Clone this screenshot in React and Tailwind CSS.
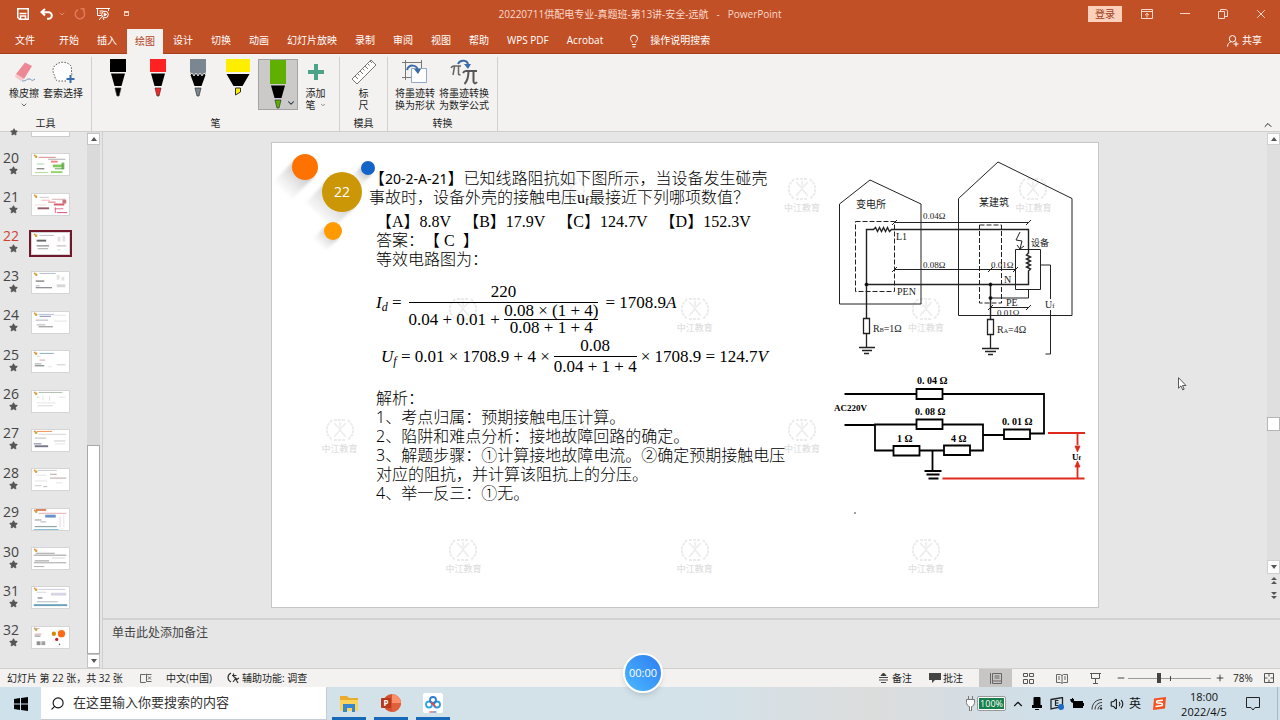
import { useState } from 'react';
import { Search, ChevronDown, ChevronUp, Star, Lightbulb, Volume2, Minus, Plus, X } from 'lucide-react';

const TABS = ['开始', '插入', '绘图', '设计', '切换', '动画', '幻灯片放映', '录制', '审阅', '视图', '帮助', 'WPS PDF', 'Acrobat'];

// marks: [x, y, width, height, color] inside a 37 x 22 thumbnail
const SLIDES = [
    { no: 20, marks: [[6, 3, 18, 1, '#c66'], [16, 5, 18, 1, '#999'], [19, 7, 7, 2, '#e66'], [4, 10, 8, 1, '#9c9'], [21, 11, 11, 3, '#6b3'], [30, 9, 3, 7, '#5aa845'], [23, 15, 9, 1, '#393'], [19, 18, 12, 2, '#7c4'], [4, 15, 8, 1, '#333'], [2, 19, 14, 1, '#9c7']] },
    { no: 21, marks: [[7, 3, 10, 1, '#bbb'], [9, 6, 9, 1, '#e9a'], [16, 8, 8, 1, '#c44'], [20, 5, 14, 1, '#c99'], [31, 6, 4, 4, '#b55'], [22, 10, 11, 2, '#c34'], [2, 11, 12, 1, '#ecc'], [5, 14, 12, 2, '#734'], [23, 14, 1, 6, '#d46'], [23, 15, 9, 1, '#d46'], [25, 19, 11, 1, '#c25']] },
    { no: 22, marks: [[7, 2, 15, 1, '#aab'], [4, 7, 10, 2, '#444'], [4, 13, 13, 1, '#444'], [5, 16, 11, 1, '#888'], [26, 4, 3, 5, '#ddd'], [31, 3, 3, 6, '#ddd'], [25, 13, 10, 1, '#a99'], [26, 17, 3, 1, '#ccc']] },
    { no: 23, marks: [[7, 1, 17, 1, '#9ac'], [3, 9, 9, 1, '#222'], [3, 14, 4, 1, '#99c'], [3, 16, 17, 1, '#444'], [25, 3, 3, 5, '#ddd'], [30, 5, 3, 4, '#ddd'], [25, 13, 9, 3, '#ccc']] },
    { no: 24, marks: [[6, 2, 16, 1, '#9ac'], [7, 4, 12, 1, '#669'], [3, 8, 13, 1, '#99a'], [22, 3, 12, 1, '#ddd'], [22, 9, 14, 1, '#ddd'], [4, 13, 9, 1, '#99a'], [6, 15, 15, 1, '#666']] },
    { no: 25, marks: [[7, 2, 15, 1, '#69a'], [4, 5, 4, 1, '#ccc'], [7, 9, 6, 1, '#c88'], [2, 13, 7, 1, '#888'], [2, 15, 10, 1, '#444'], [25, 14, 9, 1, '#bbb'], [16, 16, 4, 1, '#ddd']] },
    { no: 26, marks: [[6, 1, 25, 1, '#9a9'], [4, 6, 3, 1, '#ccc'], [10, 5, 1, 5, '#ddd'], [17, 5, 1, 5, '#ddd'], [27, 6, 7, 1, '#ddd'], [4, 12, 20, 1, '#ddd'], [5, 15, 16, 1, '#ccc']] },
    { no: 27, marks: [[4, 1, 16, 1, '#e73'], [6, 4, 29, 1, '#ccc'], [2, 8, 12, 1, '#aaa'], [1, 14, 8, 1, '#558'], [2, 16, 14, 2, '#556'], [22, 11, 12, 1, '#bbb'], [23, 14, 11, 1, '#ddd']] },
    { no: 28, marks: [[5, 1, 20, 1, '#bbb'], [3, 6, 11, 1, '#ddd'], [18, 5, 7, 1, '#a88'], [18, 9, 17, 1, '#a88'], [2, 12, 13, 1, '#ddd'], [24, 14, 7, 1, '#ddd'], [2, 17, 7, 1, '#bbb'], [11, 18, 4, 1, '#a9a']] },
    { no: 29, marks: [[3, 0, 11, 2, '#c63'], [6, 4, 29, 1, '#d99'], [13, 6, 11, 3, '#47b'], [2, 11, 7, 1, '#777'], [8, 13, 6, 1, '#99a'], [2, 18, 23, 1, '#577'], [28, 8, 1, 11, '#dcc'], [32, 6, 1, 13, '#dde'], [1, 21, 26, 1, '#6ac']] },
    { no: 30, marks: [[3, 5, 20, 1, '#888'], [1, 7, 34, 1, '#777'], [2, 13, 15, 1, '#777'], [20, 10, 14, 1, '#ccc'], [1, 15, 34, 1, '#888'], [1, 19, 11, 1, '#999']] },
    { no: 31, marks: [[6, 2, 28, 1, '#bbd'], [4, 5, 10, 1, '#ccd'], [19, 6, 16, 3, '#ccd'], [5, 11, 5, 1, '#334'], [4, 15, 22, 1, '#9aa'], [1, 18, 35, 2, '#48a']] },
    { no: 32, marks: [[1, 1, 6, 1, '#aaa'], [2, 7, 7, 1, '#c88'], [2, 9, 6, 1, '#555'], [4, 15, 4, 4, '#777'], [9, 15, 4, 4, '#888']] },
];

const WATERMARKS = [
    { place: 'left-[34%] top-[7%]' },
    { place: 'left-[62%] top-[7%]', label: true },
    { place: 'left-[90%] top-[7%]', label: true },
    { place: 'left-[21%] top-[33%]' },
    { place: 'left-[49%] top-[33%]', label: true },
    { place: 'left-[77%] top-[33%]', label: true },
    { place: 'left-[6%] top-[59%]', label: true },
    { place: 'left-[34%] top-[59%]' },
    { place: 'left-[62%] top-[59%]', label: true },
    { place: 'left-[21%] top-[85%]', label: true },
    { place: 'left-[49%] top-[85%]', label: true },
    { place: 'left-[77%] top-[85%]', label: true },
];

function TitleBar() {
    return (
        <header className="flex h-[27px] items-center">
            <div className="flex flex-1 items-center">
                <button aria-label="保存" className="ml-4 flex h-6 w-[14px] items-center justify-center">
                    <svg width="12" height="12" viewBox="0 0 12 12" fill="none" stroke="currentColor">
                        <path d="M.75.75h10.5v10.5H2.5L.75 9.5z" strokeWidth="1.5" />
                        <path d="M2.5 5.5h7M3.5 11V8h5v3" strokeWidth="1.5" />
                    </svg>
                </button>
                <button aria-label="撤消" className="ml-[10px] flex h-6 w-[14px] items-center justify-center">
                    <svg width="14" height="12" viewBox="0 0 14 12" fill="none" stroke="currentColor" strokeWidth="2">
                        <path d="M5 1 1.5 4 5 7.5M2 4.2h6.5a3.3 3.3 0 0 1 0 6.6H7" />
                    </svg>
                </button>
                <ChevronDown className="ml-1 h-2 w-2 text-[#f0a890]" />
                <button aria-label="恢复" className="ml-[7px] flex h-6 w-[14px] items-center justify-center text-[#e0795a]">
                    <svg width="12" height="12" viewBox="0 0 12 12" fill="none" stroke="currentColor" strokeWidth="1.5">
                        <path d="M4 1.8A4.7 4.7 0 1 0 9 2.5M6.5.8H10v3.7" />
                    </svg>
                </button>
                <button aria-label="从头开始" className="ml-[9px] flex h-6 w-[14px] items-center justify-center">
                    <svg width="14" height="14" viewBox="0 0 14 14" fill="none" stroke="currentColor">
                        <path d="M0 1.5h14M1.5 1.5v7h4M12.5 1.5V4M3.5 4h4M3.5 6h2M3 13l3-3.5M8 13l-1-2" />
                        <circle cx="9" cy="7.5" r="3.3" />
                        <path d="m8.2 6 2.3 1.5L8.2 9z" fill="currentColor" />
                    </svg>
                </button>
                <span className="ml-[14px] h-[5px] w-[5px] border border-t-2 border-[#f6cdbd]" />
            </div>
            <h1 className="flex gap-2 whitespace-nowrap text-[10px] leading-4 text-[#fbd9cc]">
                <span>20220711供配电专业-真题班-第13讲-安全-远航</span>
                <span>-</span>
                <span>PowerPoint</span>
            </h1>
            <div className="flex flex-1 items-center justify-end text-[#fbd9cc]">
                <button className="h-4 w-[34px] bg-[#fdd0bb] text-[10px] leading-4 text-[#9c3f20]">登录</button>
                <button aria-label="功能区显示选项" className="ml-[6px] flex h-6 w-[38px] items-center justify-center">
                    <svg width="12" height="10" viewBox="0 0 12 10" fill="none" stroke="currentColor">
                        <path d="M.5.5h11v9H.5zM.5 2.5h11M6 8.5v-4M4 6.2l2-1.9 2 1.9" />
                    </svg>
                </button>
                <button aria-label="最小化" className="flex h-6 w-[38px] items-center justify-center">
                    <svg width="10" height="2" viewBox="0 0 10 2"><path d="M0 .5h10" stroke="currentColor" /></svg>
                </button>
                <button aria-label="还原" className="flex h-6 w-[38px] items-center justify-center">
                    <svg width="10" height="10" viewBox="0 0 10 10" fill="none" stroke="currentColor">
                        <path d="M.5 2.5h6v7h-6zM2.5 2.3V.5h5.2c1 0 1.8.8 1.8 1.8v5.2H7" />
                    </svg>
                </button>
                <button aria-label="关闭" className="flex h-6 w-[38px] items-center justify-center">
                    <X className="h-[14px] w-[14px]" strokeWidth={1.7} />
                </button>
            </div>
        </header>
    );
}

function TabBar({ active, onSelect }) {
    return (
        <nav className="flex h-[27px] items-end border-b border-[#a63f1b] text-[10px]">
            <button className="ml-[15px] mr-[15px] h-[25px] leading-[25px]">文件</button>
            {TABS.map((tab) => (
                <button
                    key={tab}
                    onClick={() => onSelect(tab)}
                    className={`h-[25px] whitespace-nowrap leading-[25px] ${active === tab ? '-mb-px px-2 mx-px bg-[#f3f2f1] text-[#b5431c]' : 'px-[9px]'}`}
                >
                    {tab}
                </button>
            ))}
            <button className="ml-[15px] flex h-[25px] items-center gap-[9px] leading-[25px]">
                <Lightbulb className="h-[14px] w-[14px]" strokeWidth={1.7} />
                <span>操作说明搜索</span>
            </button>
            <button className="ml-auto mr-[18px] flex h-[25px] items-center gap-[3px] leading-[25px]">
                <svg width="12" height="12" viewBox="0 0 12 12" fill="none" stroke="currentColor">
                    <circle cx="5.5" cy="3.8" r="3.2" />
                    <path d="M.5 11.5c0-2.5 1.5-4 3.5-4.7M9 6.5v5M6.5 9h5" />
                </svg>
                <span>共享</span>
            </button>
        </nav>
    );
}

function Group({ label, className = '', children }) {
    return (
        <section className="flex h-[74px] flex-col border-r border-[#d2d0ce]">
            <div className={`flex flex-1 items-start ${className}`}>{children}</div>
            <div className="text-center leading-4">{label}</div>
        </section>
    );
}

function Tool({ icon, lines, className = '' }) {
    return (
        <button className={`flex flex-col items-center whitespace-nowrap leading-3 ${className}`}>
            <span className="flex h-[30px] items-center">{icon}</span>
            {lines.map((line, idx) => (
                <span key={idx} className="flex h-3 items-center justify-center">{line}</span>
            ))}
        </button>
    );
}

function Pen({ name, color, type = 'pen', selected }) {
    const wide = type === 'marker';
    return (
        <button aria-label={name} className={`relative flex h-[51px] w-10 justify-center ${selected ? 'border border-[#a3a3a3] bg-[#cbcac8]' : ''}`}>
            <svg width="24" height="49" viewBox="0 0 24 49">
                <rect x={wide ? 0 : 4} y="0" width={wide ? 24 : 16} height={selected ? 24 : 13} fill={color} />
                <g transform={selected ? 'translate(0 11)' : undefined}>
                    {wide && <path d="M.5 15h23l-7 12h-9z" />}
                    {wide && <path d="M9.5 29h5v4l-5 3z" fill={color} stroke="#333" />}
                    {type === 'pencil' && <path d="M4.5 16 8.5 27h7l4-11-1.5-2h-12z" />}
                    {type === 'pencil' && <path d="M4 11v5l2-2 2 3 2-3 2 3 2-3 2 3 2-3 2 2v-5z" fill={color} stroke="#f3f2f1" strokeWidth=".8" />}
                    {type === 'pencil' && <rect x="4" width="16" height="13" fill={color} />}
                    {type === 'pen' && <path d="M5 14.5h14L15.5 27h-7z" />}
                    {!wide && <path d="M9 29h6l-2 8h-2z" fill={color} stroke="#333" strokeWidth=".7" />}
                </g>
            </svg>
            {selected && <ChevronDown className="absolute bottom-px right-px h-[10px] w-[10px] text-gray-800" strokeWidth={2.5} />}
        </button>
    );
}

function Ribbon() {
    return (
        <div className="flex h-[78px] border-b border-[#d0cfce] bg-[#f3f2f1] pt-[3px] text-[10px] text-[#222]">
            <Group label="工具" className="pl-2 pr-[7px]">
                <Tool
                    className="w-8"
                    lines={['橡皮擦', <ChevronDown key="more" className="h-2 w-2" />]}
                    icon={
                        <svg width="24" height="24" viewBox="0 0 24 24">
                            <path d="M13 2.5 20 6l-8 13-8-5z" fill="#ee8795" />
                            <path d="m4 14 8 5-3 2-6-4z" fill="#f8c7cc" />
                            <path d="M10 21c5 0 4-2 7-2s2 3 6 0" fill="none" stroke="#6d92bd" />
                        </svg>
                    }
                />
                <Tool
                    className="ml-[2px] w-[42px]"
                    lines={['套索选择']}
                    icon={
                        <svg width="24" height="24" viewBox="0 0 24 24" fill="none">
                            <path d="M15 21H7c-3-1-3-3-3-5-3-4-3-9 2-12 4-3 11-2 14 2 1 3 0 6 1 9" fill="#fff" stroke="#555" strokeDasharray="1.5 1.5" />
                            <path d="M19.5 15v8M15.5 19h8" stroke="#3b6caa" strokeWidth="2" />
                        </svg>
                    }
                />
            </Group>
            <Group label="笔" className="pl-[6px] pr-[6px] pt-[2px]">
                <Pen name="黑色笔" color="#000" />
                <Pen name="红色笔" color="#ff2222" />
                <Pen name="铅笔" color="#7a8791" type="pencil" />
                <Pen name="黄色荧光笔" color="#ffee00" type="marker" />
                <Pen name="绿色笔" color="#5fb000" selected />
                <Tool
                    className="-mt-[2px] w-[35px]"
                    lines={['添加', <span key="pen" className="flex items-center gap-1">笔 <ChevronDown className="h-[6px] w-[6px]" /></span>]}
                    icon={<svg width="16" height="16" viewBox="0 0 16 16"><path d="M6 0h4v6h6v4h-6v6H6v-6H0V6h6z" fill="#4ca389" /></svg>}
                />
            </Group>
            <Group label="模具" className="justify-center px-2">
                <Tool
                    className="w-[31px]"
                    lines={['标', '尺']}
                    icon={
                        <svg width="26" height="26" viewBox="0 0 26 26" fill="#fff" stroke="#777">
                            <path d="m1 20 19-19 5 5L6 25z" />
                            <path d="m4 17 3 3m-.5-5.5 2 2M9 12l3 3m-.5-5.5 2 2M14 7l3 3m-.5-5.5 2 2M19 2l2 2" />
                        </svg>
                    }
                />
            </Group>
            <Group label="转换" className="pl-[6px] pr-[7px]">
                <Tool
                    className="w-[42px]"
                    lines={['将墨迹转', '换为形状']}
                    icon={
                        <svg width="26" height="26" viewBox="0 0 26 26" fill="none">
                            <path d="M3.5 1v20M0 3.5h20M0 18.5h9M19.5 1v8" stroke="#777" />
                            <path d="M9.5 9.5h15v14h-15z" fill="#fff" stroke="#8fa9c7" />
                            <path d="M5 11c2-6 10-6 11 1" stroke="#3b6caa" strokeWidth="2" />
                            <path d="m12 10 4 5 3-5" fill="#3b6caa" />
                        </svg>
                    }
                />
                <Tool
                    className="ml-[2px] w-[52px]"
                    lines={['将墨迹转换', '为数学公式']}
                    icon={
                        <svg width="28" height="27" viewBox="0 0 28 27" fill="none">
                            <path d="M1 9c1-2 2-2 3-2h7M4.5 7.5 3 16M8.5 7.5V15c0 1 1 1 2 .5" stroke="#666" strokeWidth="1.5" />
                            <path d="M13 14c1-2 2-2 3-2h11M18.5 12c0 6-1 10-4 13M23.5 12v10c0 3 2 3 3.5 1" stroke="#555" strokeWidth="2" />
                            <path d="M8 5c2-5 10-4 10 1" stroke="#3b6caa" strokeWidth="2" />
                            <path d="m14 5 4 5 3-5" fill="#3b6caa" />
                        </svg>
                    }
                />
            </Group>
            <button aria-label="折叠功能区" className="ml-auto mr-1 self-end">
                <ChevronUp className="h-3 w-4" strokeWidth={2} />
            </button>
        </div>
    );
}

function Thumbnail({ slide, selected, onSelect }) {
    return (
        <button onClick={() => onSelect(slide.no)} className="flex min-h-0 flex-1 items-center pl-[3px] text-left">
            <span className={`flex w-[26px] flex-col pb-[4px] text-[14px] leading-[14px] ${selected ? 'text-[#d04030]' : 'text-[#444]'}`}>
                {slide.no}
                <Star className="ml-[6px] mt-px h-[9px] w-[9px] fill-[#555] text-[#555]" />
            </span>
            <span className={selected ? 'border-2 border-[#73182a]' : 'p-[2px]'}>
                <svg className="border border-[#d5d5d5] bg-white" width="39" height="23" viewBox="0 0 37 22">
                    <circle cx="2" cy="1.5" r="1" fill="#f08a3c" />
                    <circle cx="3.5" cy="3" r="1.3" fill="#c8a23a" />
                    {slide.marks.map(([x, y, w, h, color], idx) => (
                        <rect key={idx} x={x} y={y} width={w} height={h} fill={color} opacity=".8" />
                    ))}
                    {slide.no === 32 && (
                        <g>
                            <circle cx="22" cy="7" r="2.3" fill="#d08a10" />
                            <circle cx="30" cy="7" r="3.8" fill="#ff6a13" />
                            <circle cx="25" cy="13" r="1.7" fill="#c2202f" />
                            <circle cx="28" cy="18" r=".8" fill="#555" />
                        </g>
                    )}
                </svg>
            </span>
        </button>
    );
}

function Arrow({ up, double }) {
    return (
        <svg width="8" height="8" viewBox="0 0 8 8" fill="#555" className={up ? '' : 'rotate-180'}>
            {double ? <path d="M4 0 7 3H1zM4 4l3 3H1z" /> : <path d="m4 2 3 4H1z" />}
        </svg>
    );
}

function SlidePanel() {
    const [current, setCurrent] = useState(22);
    return (
        <aside className="flex w-[103px] shrink-0 border-r border-[#cfcfcf]">
            <div className="flex flex-1 flex-col pb-[11px]">
                <div className="flex h-[13px] shrink-0 items-start pl-[10px]">
                    <Star className="-mt-1 h-2 w-2 fill-[#555] text-[#555]" />
                    <span className="ml-[13px] h-[5px] w-[39px] border border-t-0 border-[#ccc] bg-white" />
                </div>
                {SLIDES.map((slide) => (
                    <Thumbnail key={slide.no} slide={slide} selected={slide.no === current} onSelect={setCurrent} />
                ))}
            </div>
            <div className="mr-[2px] flex w-[13px] flex-col bg-[#dadada] pt-px">
                <button aria-label="向上滚动" className="flex h-3 items-center justify-center border border-[#c4c4c4] bg-white"><Arrow up /></button>
                <div className="flex flex-1 flex-col justify-end">
                    <div className="h-[41%] border border-[#a8a8a8] bg-white" />
                </div>
                <button aria-label="向下滚动" className="flex h-[14px] items-center justify-center border border-[#c4c4c4] bg-white"><Arrow /></button>
            </div>
        </aside>
    );
}

function Watermark({ place, label }) {
    return (
        <div className={`absolute flex w-9 flex-col items-center text-[#ececec] ${place}`}>
            <svg width="32" height="26" viewBox="0 0 32 26" fill="none" stroke="currentColor">
                <path d="M8 3 3 9v8l5 6M24 3l5 6v8l-5 6M10 3h12M10 23h12" strokeDasharray="3 1" strokeWidth="2" />
                <path d="m10 6 6 6 6-6M10 20l6-7 6 7M16 5v5" strokeWidth="1.5" />
            </svg>
            {label && <span className="text-[9px] font-medium leading-3 text-[#e0e0e0]">中江教育</span>}
        </div>
    );
}

function Bubbles() {
    return (
        <svg className="absolute left-0 top-0" width="120" height="120" viewBox="0 0 120 120">
            <defs>
                <linearGradient id="shade" x1="1" y1="0" x2="0" y2="1">
                    <stop offset=".3" stopColor="#999" stopOpacity=".55" />
                    <stop offset=".85" stopColor="#ccc" stopOpacity="0" />
                </linearGradient>
                <filter id="soft"><feGaussianBlur stdDeviation="1.5" /></filter>
            </defs>
            <g fill="url(#shade)" filter="url(#soft)">
                <path d="M24 16 2 38l18 18 22-22z" />
                <path d="M56 37 34 59l27 26 22-21z" />
                <path d="M91 22 78 35l9 9 13-13z" />
                <path d="M54 83 42 95l12 12 13-12z" />
            </g>
            <circle cx="33" cy="24" r="13" fill="#ff7200" />
            <circle cx="96" cy="25" r="7" fill="#1264c8" />
            <circle cx="61" cy="88" r="9" fill="#ff9a00" />
            <circle cx="70" cy="49" r="20" fill="#cc9706" />
            <text x="70" y="54" textAnchor="middle" fontSize="14" fill="#fff">22</text>
        </svg>
    );
}

function Frac({ num, den }) {
    return (
        <span className="flex flex-col text-center">
            <span className="h-5 leading-5">{num}</span>
            <span className="border-t border-black">{den}</span>
        </span>
    );
}

function Question() {
    return (
        <div className="whitespace-nowrap pl-[97px] pt-[26px] font-['Liberation_Serif','Noto_Sans_CJK_SC',serif] text-[16px] font-light leading-[19px] text-black [text-spacing-trim:space-all]">
            <p>
                【<span className="font-['Noto_Sans',sans-serif] text-[14px] font-normal">20-2-A-21</span>】已知线路阻抗如下图所示，当设备发生碰壳
                <br />
                事故时，设备外壳的接触电压u<sub className="bottom-[-2px] text-[12px]">f</sub>最接近下列哪项数值？
            </p>
            <div className="pl-[7px] pt-[5px]">
                <p className="flex gap-3">
                    <span>【A】8.8V</span>
                    <span>【B】17.9V</span>
                    <span>【C】124.7V</span>
                    <span>【D】152.3V</span>
                </p>
                <p>答案：【 C&nbsp; 】</p>
                <p>等效电路图为：</p>
                <div className="mt-[13px] flex items-start text-[17px]">
                    <span className="mr-[7px] leading-[42px]"><i>I<sub className="text-[12px]">d</sub></i> =</span>
                    <Frac
                        num="220"
                        den={
                            <span className="flex items-center">
                                <span>0.04 + 0.01 +&nbsp;</span>
                                <span className="flex flex-col leading-4">
                                    <span>0.08 × (1 + 4)</span>
                                    <span className="border-t border-black">0.08 + 1 + 4</span>
                                </span>
                            </span>
                        }
                    />
                    <span className="ml-[7px] leading-[42px]">= 1708.9<i>A</i></span>
                </div>
                <div className="flex items-center gap-1 pl-[5px] text-[17px]">
                    <span><i>U<sub className="text-[12px]">f</sub></i> = 0.01 × 1708.9 + 4 ×</span>
                    <Frac num="0.08" den={<span className="leading-5">0.04 + 1 + 4</span>} />
                    <span>× 1708.9 = 124.7<i>V</i></span>
                </div>
                <div className="mt-3 font-['Noto_Sans','Noto_Sans_CJK_SC',sans-serif]">
                    <p>解析：</p>
                    <p>1、考点归属：预期接触电压计算。</p>
                    <p>2、陷阱和难点分析：接地故障回路的确定。</p>
                    <p>3、解题步骤：①计算接地故障电流。②确定预期接触电压</p>
                    <p>对应的阻抗，并计算该阻抗上的分压。</p>
                    <p>4、举一反三：①无。</p>
                </div>
            </div>
        </div>
    );
}

// Supply building on the left, consumer building on the right
function WiringDiagram() {
    return (
        <svg className="w-full" viewBox="830 155 260 205" fill="none" stroke="#222" fontSize="9">
            <path d="M839.5 304V204L870 180l51 24v100zM958.5 315.5v-117L998 162l74 36.5v117z" />
            <path d="M855.5 221.5h39v70h-39zM979.5 225h22v78h-22z" strokeDasharray="5 2" />
            <path d="M866.5 318V229.5h7l2-2 2 4 2-4 2 4 2-4 2 4 2-4 2 4 2-2H1028.5V253l-2 2 4 2-4 2 4 2-4 2 4 2-4 2 4 2-2 2v13.5H866.5M990.5 284v35" strokeWidth="1.4" />
            <path d="M894 222.5h135M892 225l5-5M1026 225l5-5M894 269.5h121M892 272l5-5M988 272l5-5M1013 272l5-5M990 307.5h38M988 310l5-5M1026 310l5-5" />
            <path d="M1015.5 249.5h25v40h-25zM990 298h38.5v-9M1041 265h9.5v34M1050.5 310v44h-5" />
            <path d="m1020 232-4 8 6 1-2 8M1017 245l3 4 4-3" />
            <path d="M863.5 318.5h6v15h-6zM987.5 319.5h6v15h-6z" fill="#fff" strokeWidth="1.3" />
            <path d="M866.5 334v13M990.5 335v13" strokeWidth="1.3" />
            <path d="M859 347.5h16M862 350.5h10M864 353.5h5M982 348.5h17M985 351.5h11M988 354.5h5" strokeWidth="1.3" />
            <circle cx="866.5" cy="284.5" r="1.5" fill="#000" />
            <circle cx="990.5" cy="284.5" r="1.5" fill="#000" />
            <circle cx="990.5" cy="298" r="1.5" fill="#000" />
            <g stroke="none" fill="#222">
                <text x="856" y="208" fontSize="10">变电所</text>
                <text x="979" y="206" fontSize="10">某建筑</text>
                <text x="1031" y="246">设备</text>
                <text x="923" y="219">0.04Ω</text>
                <text x="923" y="268">0.08Ω</text>
                <text x="991" y="268">0.01Ω</text>
                <text x="997" y="316">0.01Ω</text>
                <text x="896" y="240" fontSize="10">L1</text>
                <text x="897" y="295" fontSize="10">PEN</text>
                <text x="1004" y="283" fontSize="10">N</text>
                <text x="1006" y="306" fontSize="10">PE</text>
                <text x="1045" y="308" fontSize="10">U<tspan fontSize="7">f</tspan></text>
                <text x="873" y="332" fontSize="10">R<tspan fontSize="6">B</tspan>=1Ω</text>
                <text x="997" y="333" fontSize="10">R<tspan fontSize="6">A</tspan>=4Ω</text>
            </g>
        </svg>
    );
}

function EquivalentCircuit() {
    return (
        <svg className="mt-[10px] w-full" viewBox="830 370 260 150" fill="none" stroke="#000" strokeWidth="1.8" fontSize="10" fontWeight="700">
            <path d="M844.5 394H1044v39.5h-14M844.5 425H875M875 424.5h108v26H875zM983 435h21M932.5 450v20" />
            <g fill="#fff">
                <path d="M916.5 389h26v10h-26zM916.5 419.5h26v9.5h-26zM893.5 446h26v9.5h-26zM944 445.5h26v9.5h-26zM1004 429.5h26v9.5h-26z" />
            </g>
            <path d="M924.5 471h17M926.5 474.5h13M928.5 478.5h10" />
            <g stroke="#df2a1c">
                <path d="M1048 433h37M942.5 478.5h142M1077.5 433v12M1077.5 467v11" />
                <path d="m1077.5 452-2.5-6h5zM1077.5 461l-2.5 6h5z" fill="#df2a1c" strokeWidth=".8" />
            </g>
            <g stroke="none" fill="#000">
                <text x="917" y="384">0. 04 Ω</text>
                <text x="915" y="415">0. 08 Ω</text>
                <text x="1002" y="425">0. 01 Ω</text>
                <text x="897" y="442">1 Ω</text>
                <text x="951" y="442">4 Ω</text>
                <text x="834" y="411" fontSize="9">AC220V</text>
                <text x="1072" y="460" fontSize="9">U<tspan fontSize="7">f</tspan></text>
                <circle cx="855" cy="513" r=".7" />
            </g>
        </svg>
    );
}

function Editor() {
    return (
        <div className="flex min-h-0 flex-1">
            <div className="flex flex-1 items-center justify-center">
                <article className="relative flex aspect-video w-full max-w-[828px] justify-between border border-[#c6c6c6] bg-white">
                    {WATERMARKS.map((mark) => <Watermark key={mark.place} {...mark} />)}
                    <Bubbles />
                    <div className="relative"><Question /></div>
                    <div className="relative mr-2 w-[260px] shrink-0 pt-3 font-['Liberation_Serif','Noto_Sans_CJK_SC',serif]">
                        <WiringDiagram />
                        <EquivalentCircuit />
                    </div>
                </article>
            </div>
            <div className="flex w-[13px] flex-col items-center pt-px">
                <button aria-label="上一行" className="flex h-3 w-full items-center justify-center border border-[#d0d0d0] bg-white"><Arrow up /></button>
                <div className="flex w-full flex-1 flex-col bg-[#dfdfdf]">
                    <div className="flex-[65]" />
                    <div className="h-[14px] border border-[#b5b5b5] bg-white" />
                    <div className="flex-[31]" />
                </div>
                <button aria-label="下一行" className="flex h-[14px] w-full items-center justify-center border border-[#d0d0d0] bg-white"><Arrow /></button>
                <button aria-label="上一张" className="flex h-[14px] items-center"><Arrow up double /></button>
                <button aria-label="下一张" className="mb-4 flex h-[14px] items-center"><Arrow double /></button>
            </div>
        </div>
    );
}

function StatusBar() {
    return (
        <footer className="flex h-[19px] items-center whitespace-nowrap border-t border-[#d0d0d0] bg-[#f3f2f1] pl-[7px] text-[10px] text-[#222]">
            <span className="w-[133px]">幻灯片 第 22 张，共 32 张</span>
            <svg width="12" height="10" viewBox="0 0 12 10" fill="none" stroke="#666">
                <path d="M5.5 1.5H.5v8h5l1-1V1l-1 .5M6.5 1.5h5M11.5 8.5h-5M8 3.5l3 3M11 3.5l-3 3" />
            </svg>
            <span className="ml-[14px] w-[61px]">中文(中国)</span>
            <svg width="13" height="12" viewBox="0 0 13 12" fill="none" stroke="#333">
                <path d="M4 1C0 3 0 8 4 10M5 3.5h4.5M6.5 1.5v3l4 3M6 10l3-4M8 6l3 5M9 8l3-2" strokeWidth="1.2" />
            </svg>
            <span className="ml-[2px]">辅助功能: 调查</span>
            <button className="ml-auto mr-[17px] flex items-center gap-[3px]">
                <svg width="11" height="10" viewBox="0 0 11 10" stroke="#333"><path d="M1 4.5h9M1 7h9M3 9.5h5M5.5 0 8 2.5H3z" fill="#333" strokeWidth=".9" /></svg>
                备注
            </button>
            <button className="mr-4 flex items-center gap-[2px]">
                <svg width="12" height="10" viewBox="0 0 12 10"><path d="M0 0h12v7H6L3 10V7H0z" fill="#444" /></svg>
                批注
            </button>
            <button aria-label="普通视图" className="flex h-[18px] w-[33px] items-center justify-center bg-[#c8c6c4]">
                <svg width="12" height="11" viewBox="0 0 12 11" fill="none" stroke="#666"><path d="M.5 0v11M2.5.5h9v10h-9zM4.5 3h5M4.5 5h5M3 8h9" /></svg>
            </button>
            <button aria-label="幻灯片浏览" className="flex h-[18px] w-[33px] items-center justify-center">
                <svg width="11" height="11" viewBox="0 0 11 11" fill="none" stroke="#555"><path d="M.5.5h4v3h-4zM6.5.5h4v3h-4zM.5 6.5h4v4h-4zM6.5 6.5h4v4h-4z" /></svg>
            </button>
            <button aria-label="阅读视图" className="flex h-[18px] w-[34px] items-center justify-center">
                <svg width="12" height="11" viewBox="0 0 12 11" fill="none" stroke="#666"><path d="M.5 1.5h4l1.5 1 1.5-1h4v8h-4L6 10.5l-1.5-1h-4zM6 2v8M2 4h2M2 6h2M8 4h2M8 6h2" /></svg>
            </button>
            <button aria-label="幻灯片放映" className="flex h-[18px] w-[33px] items-center justify-center">
                <svg width="11" height="11" viewBox="0 0 11 11" fill="none" stroke="#555"><path d="M0 .5h11M1.5.5v5h8v-5M5.5 5.5v5M3 10.5h5" /></svg>
            </button>
            <button aria-label="缩小" className="ml-1"><Minus className="h-[10px] w-[10px]" /></button>
            <span className="relative ml-[2px] mr-1 flex items-center">
                <input
                    type="range"
                    aria-label="缩放"
                    min="0"
                    max="100"
                    defaultValue="37"
                    className="h-[11px] w-[83px] appearance-none bg-linear-to-b from-transparent from-45% via-[#444] via-45% to-transparent to-55% [&::-webkit-slider-thumb]:h-[10px] [&::-webkit-slider-thumb]:w-[4px] [&::-webkit-slider-thumb]:appearance-none [&::-webkit-slider-thumb]:bg-[#444]"
                />
                <span className="absolute left-1/2 top-[3px] h-[5px] w-px bg-[#444]" />
            </span>
            <button aria-label="放大"><Plus className="h-[10px] w-[10px]" /></button>
            <span className="ml-2 w-[31px]">78%</span>
            <button aria-label="适应窗口" className="mr-[6px]">
                <svg width="10" height="10" viewBox="0 0 10 10" fill="none" stroke="#555"><path d="M.5.5h9v9h-9zM5 1v2.5M5 6.5V9M1 5h2.5M6.5 5H9" /></svg>
            </button>
        </footer>
    );
}

function Taskbar() {
    return (
        <div className="flex h-[33px] items-center bg-linear-to-r from-[#d3e2e9] from-55% via-[#dcdcdc] via-68% to-[#cfdfe9] to-82% text-[#111]">
            <button aria-label="开始" className="flex h-full w-[41px] items-center justify-center bg-[#cfe2ec]">
                <svg width="14" height="14" viewBox="0 0 14 14"><path d="M0 2l6-1v5.5H0zM7 1l7-1v6.5H7zM0 7.5h6V13l-6-1zM7 7.5h7V14l-7-1z" /></svg>
            </button>
            <label className="flex h-full w-[286px] items-center border-r border-b border-[#c5cdd2] bg-white pl-[9px]">
                <Search className="h-[15px] w-[15px] shrink-0 -scale-x-100" strokeWidth={1.8} />
                <input className="ml-2 w-full min-w-0 text-[13px] outline-none placeholder:text-[#333]" placeholder="在这里输入你要搜索的内容" />
            </label>
            <div className="ml-[5px] flex h-full gap-2">
                <button aria-label="文件资源管理器" className="flex h-full w-[34px] flex-col items-center border-b-3 border-[#1668b8] pt-2">
                    <svg width="20" height="18" viewBox="0 0 20 18">
                        <path d="M1 1h7l2 2h9v13H1z" fill="#e9ac2b" />
                        <path d="M1 5h18v11H1z" fill="#fbd35d" />
                        <path d="M4 9h12v8h-3v-4H8v4H4z" fill="#3587cf" />
                    </svg>
                </button>
                <button aria-label="PowerPoint" className="flex h-full w-[34px] flex-col items-center border-b-3 border-[#1668b8] pt-[6px]">
                    <svg width="20" height="20" viewBox="0 0 20 20">
                        <circle cx="11" cy="10" r="9" fill="#d35230" />
                        <path d="M11 1a9 9 0 0 1 9 9h-9z" fill="#ff8f6b" />
                        <path d="M11 10h9a9 9 0 0 1-9 9z" fill="#e0603c" />
                        <rect x="0" y="5" width="10" height="10" rx="1" fill="#b7381b" />
                        <text x="5" y="13" textAnchor="middle" fontSize="8" fontWeight="700" fill="#fff">P</text>
                    </svg>
                </button>
                <button aria-label="百度网盘" className="flex h-full w-[34px] flex-col items-center border-b-3 border-[#1668b8] pt-[6px]">
                    <svg width="20" height="20" viewBox="0 0 20 20" fill="none" strokeWidth="1.8">
                        <rect width="20" height="20" rx="2" fill="#fff" />
                        <circle cx="6" cy="11.5" r="3" stroke="#2fa8e0" />
                        <circle cx="14" cy="11.5" r="3" stroke="#2f9be0" />
                        <circle cx="10" cy="7" r="3" stroke="#2b7fd0" />
                        <path d="M8 9.5c2 0 2.5 3 4.5 4" stroke="#e5484d" />
                        <path d="M6.5 19h3.5" stroke="#e5484d" strokeWidth="1.2" />
                        <path d="M10 19h3.5" stroke="#2b7fd0" strokeWidth="1.2" />
                    </svg>
                </button>
            </div>
            <div className="ml-auto flex h-full items-center text-[10px]">
                <svg width="11" height="15" viewBox="0 0 11 15" fill="#fff" stroke="#777">
                    <path d="M3.5 0v3M7.5 0v3M1.5 3.5h8v3c0 2-1 3.5-3 4V15h-2v-4.5c-2-.5-3-2-3-4z" />
                </svg>
                <span className="ml-px h-[15px] rounded-xs border border-[#999] bg-white p-px leading-[11px]">
                    <span className="block bg-[#17804a] px-px text-[9px] text-white">100%</span>
                </span>
                <ChevronUp className="ml-[5px] h-[14px] w-[14px]" strokeWidth={2} />
                <svg className="ml-[7px]" width="10" height="14" viewBox="0 0 10 14"><rect x="1.5" width="7" height="10" rx="1" /><path d="M0 8v3h10V8M3 12h4v1H3z" /></svg>
                <svg className="ml-2" width="14" height="13" viewBox="0 0 14 13" fill="none" stroke="#222">
                    <path d="M1 2.5 12.5.5v9L1 12z" strokeWidth="1.3" />
                    <path d="M8.5 3.5H5.5v5h3M5.5 6h3" strokeWidth="1.2" />
                    <circle cx="11" cy="10" r="3" fill="#1d6bc4" stroke="none" />
                </svg>
                <svg className="ml-[6px]" width="14" height="12" viewBox="0 0 14 12"><path d="M0 1h2V0h1v1h1v2h9v2h1v3h-1v2H3V5L1 4z" /></svg>
                <svg className="ml-[6px]" width="14" height="14" viewBox="0 0 14 14" fill="none" stroke="#333">
                    <path d="M2 12.5C2 6.5 6 2.5 12 2.5M5 12.5c0-4 3-7 7-7M8 12.5c0-2.5 1.5-4 4-4" />
                    <circle cx="11" cy="11.5" r="1.2" fill="#333" stroke="none" />
                </svg>
                <Volume2 className="ml-[6px] h-[14px] w-[14px]" strokeWidth={1.8} />
                <span className="ml-[5px] text-[12px]">英</span>
                <svg className="ml-3" width="13" height="13" viewBox="0 0 13 13">
                    <path d="M1 1.5 13 0l-1 11.5L0 13z" fill="#f4511e" />
                    <path d="M10 3.3 5 3.8c-2 .2-2 2 0 2.2l3 .3c2 .2 2 2.3 0 2.5l-5.5.7" fill="none" stroke="#fff" strokeWidth="1.6" />
                </svg>
                <div className="ml-3 w-[52px] text-center text-[11px] leading-[15px]">
                    <div>18:00</div>
                    <div>2022/4/5</div>
                </div>
                <svg className="ml-4" width="14" height="14" viewBox="0 0 14 14" fill="none" stroke="#222"><path d="M.5.5h13v10H9L7 13l-2-2.5H.5z" /></svg>
                <span className="ml-[17px] mr-[2px] h-full w-px bg-[#aab8c0]" />
            </div>
        </div>
    );
}

export default function App() {
    const [tab, setTab] = useState('绘图');

    return (
        <div className="relative flex h-screen flex-col overflow-hidden bg-[#e6e6e6] font-['Open_Sans','Noto_Sans_CJK_SC',sans-serif]">
            <div className="bg-[#c15027] text-white">
                <TitleBar />
                <TabBar active={tab} onSelect={setTab} />
            </div>
            <Ribbon />
            <main className="flex min-h-0 flex-1">
                <SlidePanel />
                <div className="flex min-w-0 flex-1 flex-col">
                    <Editor />
                    <textarea
                        aria-label="备注"
                        className="h-[50px] resize-none border-t-2 border-[#d2d2d2] px-[9px] pt-1 text-[12px] leading-[18px] outline-none placeholder:text-[#444]"
                        placeholder="单击此处添加备注"
                    />
                </div>
            </main>
            <StatusBar />
            <Taskbar />

            {/* Floating recording timer */}
            <div className="absolute bottom-[27px] left-1/2 ml-[-17px] flex h-10 w-10 items-center justify-center rounded-full border-2 border-white bg-linear-to-tr from-[#4db8ff] to-[#2f7df0] text-[11px] text-white shadow-md">
                00:00
            </div>
            {/* Mouse pointer */}
            <svg className="absolute left-[92%] top-[377px]" width="9" height="14" viewBox="0 0 9 14">
                <path d="M.5.7v10.5l2.5-2.3 1.7 4 1.5-.7-1.7-3.7H8z" fill="#fff" stroke="#333" strokeWidth=".8" />
            </svg>
        </div>
    );
}
